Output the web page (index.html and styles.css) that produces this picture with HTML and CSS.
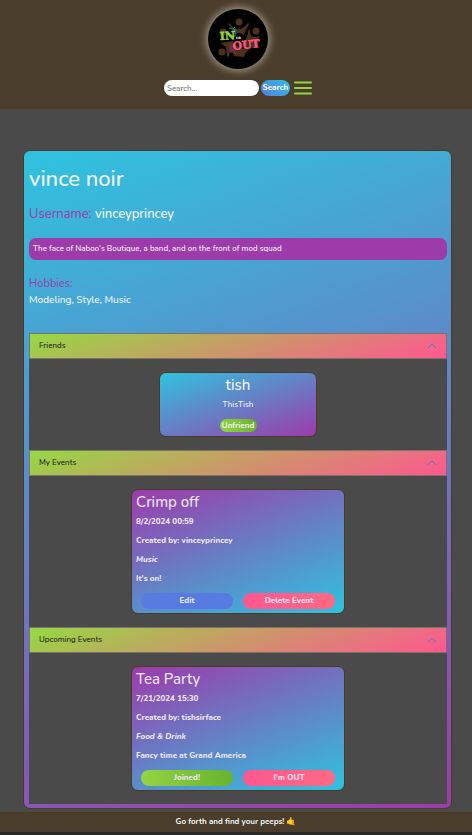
FILE: index.html
```html
<!DOCTYPE html>
<html lang="en">
<head>
<meta charset="utf-8">
<meta name="viewport" content="width=device-width, initial-scale=1">
<title>In or Out</title>
<link rel="stylesheet" href="styles.css">
</head>
<body>
<header class="site-header">
  <a class="logo" href="#" aria-label="In or Out home">
    <svg viewBox="0 0 60 60" aria-hidden="true">
      <g fill="#4b3119">
        <circle cx="31" cy="13" r="3.5"/><circle cx="48" cy="22" r="3.5"/><circle cx="14" cy="43" r="3.5"/><circle cx="15" cy="23" r="3.5"/>
        <path d="M21 14l5 5q5 3 10-1l4-4 1 1-6 12-7-1-3-6-5-5z"/>
        <path d="M41 19l2 8q5 2 8 0l-1 10-9 3-5-6 3-6z"/>
        <path d="M34 40l7 0-4 5-1 3-10-1-3-7 3-5z"/>
        <path d="M12 34l13-2 1 7-4 3-1 6-2-1-1-9z"/>
      </g>
      <circle cx="31" cy="29" r="5" fill="#050505"/>
      <g fill="none" stroke-width="1">
        <path d="M21 20l2-1 2 1 2-2M24 21h3v6h-3M27 20v5" stroke="#178b93"/>
        <path d="M23 36v8M25 41l3 4M22 43l4-3" stroke="#8b2b78"/>
      </g>
      <text class="logo-in" x="12" y="31" transform="rotate(-4 12 31)">IN</text>
      <text class="logo-or" x="28" y="30">OR</text>
      <text class="logo-out" x="25" y="41" transform="rotate(-6 25 41)">OUT</text>
    </svg>
  </a>
  <form class="search">
    <input class="search-input" type="search" placeholder="Search..." aria-label="Search">
    <button class="search-button" type="button">Search</button>
    <button class="menu-button" type="button" aria-label="Menu">
      <svg viewBox="0 0 18 14" aria-hidden="true"><path d="M1 1.5h16M1 7h16M1 12.5h16"/></svg>
    </button>
  </form>
</header>
<main class="page">
  <article class="profile">
    <h1 class="name">vince noir</h1>
    <h2 class="username"><span class="label">Username:</span> vinceyprincey</h2>
    <p class="bio">The face of Naboo's Boutique, a band, and on the front of mod squad</p>
    <h3 class="hobbies-title">Hobbies:</h3>
    <p class="hobbies">Modeling, Style, Music</p>
    <div class="accordion">
      <section>
        <button class="accordion-head" type="button" aria-expanded="true">Friends
          <svg class="chevron" viewBox="0 0 10 6" aria-hidden="true"><path d="M1 5l4-4 4 4"/></svg>
        </button>
        <div class="accordion-body">
          <div class="friend-card">
            <h4 class="card-title">tish</h4>
            <p class="friend-name">ThisTish</p>
            <button class="unfriend green" type="button">Unfriend</button>
          </div>
        </div>
      </section>
      <section>
        <button class="accordion-head" type="button" aria-expanded="true">My Events
          <svg class="chevron" viewBox="0 0 10 6" aria-hidden="true"><path d="M1 5l4-4 4 4"/></svg>
        </button>
        <div class="accordion-body">
          <div class="event-card">
            <h4 class="card-title">Crimp off</h4>
            <p>8/2/2024 00:59</p>
            <p>Created by: vinceyprincey</p>
            <p class="category">Music</p>
            <p>It's on!</p>
            <div class="actions">
              <button class="action blue" type="button">Edit</button>
              <button class="action pink" type="button">Delete Event</button>
            </div>
          </div>
        </div>
      </section>
      <section>
        <button class="accordion-head" type="button" aria-expanded="true">Upcoming Events
          <svg class="chevron" viewBox="0 0 10 6" aria-hidden="true"><path d="M1 5l4-4 4 4"/></svg>
        </button>
        <div class="accordion-body">
          <div class="event-card">
            <h4 class="card-title">Tea Party</h4>
            <p>7/21/2024 15:30</p>
            <p>Created by: tishsirface</p>
            <p class="category">Food &amp; Drink</p>
            <p>Fancy time at Grand America</p>
            <div class="actions">
              <button class="action green" type="button">Joined!</button>
              <button class="action pink" type="button">I'm OUT</button>
            </div>
          </div>
        </div>
      </section>
    </div>
  </article>
</main>
<footer class="site-footer">Go forth and find your peeps! <span class="emoji">🤙</span></footer>
</body>
</html>
```

FILE: styles.css
```css
* { box-sizing: border-box; }
body {
  margin: 0;
  min-height: 100vh;
  background: #292929;
  color: #f4f4f4;
  font: 500 8px/12px Nunito, "Open Sans", "Noto Sans", sans-serif;
}
h1, h2, h3, h4, p { margin: 0; font-weight: 500; }
button, input { font: inherit; color: inherit; border: 0; padding: 0; margin: 0; }
svg { display: block; }

.site-header {
  display: flex;
  flex-direction: column;
  align-items: center;
  gap: 11px;
  padding: 9px 0 11px 4px;
  background: #4a3d2b;
  border-bottom: 2px solid #4a3b1f;
}
.logo {
  width: 60px;
  height: 60px;
  border-radius: 50%;
  background: #000;
  box-shadow: 0 0 8px 1px #b5aa98;
}
.logo-in, .logo-out, .logo-or { font-family: "DejaVu Serif", serif; font-weight: 700; }
.logo-in { font-size: 11px; fill: #93d541; stroke: #93d541; stroke-width: 0.5; }
.logo-or { font-size: 3px; fill: #fff; }
.logo-out { font-size: 11px; fill: #fb5788; stroke: #fb5788; stroke-width: 0.5; }
.search { display: flex; align-items: center; gap: 2px; }
.search-input {
  width: 95px;
  height: 16px;
  padding: 0 3px;
  border-radius: 8px;
  background: #fff;
  color: #333;
  appearance: none;
}
.search-input::placeholder { color: #777; }
.search-button {
  width: 29px;
  height: 16px;
  border-radius: 8px;
  background: linear-gradient(45deg, #577be0, #2fc0de);
  font-weight: 800;
}
.menu-button { width: 18px; height: 14px; margin-left: 2px; background: none; }
.menu-button path { stroke: #93d541; stroke-width: 2; stroke-linecap: round; }

.page { padding: 41px 20px 3px 23px; background: #4a4a4a; }
.profile {
  padding: 12px 4px 4px 5px;
  border: 1px solid #4a3b22;
  border-radius: 7px;
  background: linear-gradient(160deg, #2fc3e0, #9d3bab);
}
.name { font-size: 22px; line-height: 32px; }
.username { margin-top: 9px; font-size: 13px; line-height: 20px; }
.label, .hobbies-title { color: #9d3bab; font-weight: 400; }
.bio {
  margin-top: 14px;
  padding: 5px 4px;
  border-radius: 7px;
  background: #9d3bab;
}
.hobbies-title { margin-top: 16px; font-size: 11px; line-height: 16px; }
.hobbies { font-size: 10px; line-height: 16px; }
.accordion { margin-top: 25px; background: #4a4a4a; }
.accordion-head {
  display: flex;
  align-items: center;
  justify-content: space-between;
  width: 100%;
  height: 26px;
  padding: 0 9px;
  border: 1px solid #7c7468;
  background: linear-gradient(160deg, #96d943, #ff5790);
  color: #222;
}
.chevron { width: 10px; height: 6px; }
.chevron path { fill: none; stroke: #5578d9; stroke-width: 1; }
.accordion-body { display: flex; justify-content: center; padding: 13px; }
.friend-card, .event-card { border: 1px solid #4a3b22; border-radius: 7px; }
.friend-card {
  display: flex;
  flex-direction: column;
  align-items: center;
  width: 158px;
  padding: 2px 4px 4px;
  background: linear-gradient(160deg, #2fc3e0, #9d3bab);
}
.card-title { font-size: 15px; line-height: 20px; }
.friend-name { margin: 4px 0 8px; }
.unfriend { width: 37px; height: 13px; border-radius: 7px; font-weight: 700; }
.green { background: linear-gradient(70deg, #96d543, #67b12e); }
.blue { background: #577be0; }
.pink { background: linear-gradient(90deg, #ff5790, #ff6982); }
.event-card {
  width: 214px;
  padding: 2px 4px 4px;
  background: linear-gradient(160deg, #9d3bab, #2fc3e0);
  color: #eae4f2;
}
.event-card p { margin-bottom: 7px; font-weight: 800; }
.event-card .card-title { margin-bottom: 4px; }
.event-card .category { font-style: italic; }
.actions { display: grid; grid-template-columns: 1fr 1fr; gap: 10px; margin-top: 8px; padding: 0 5px; }
.action { height: 16px; border-radius: 8px; font-weight: 800; }
.site-footer {
  padding: 3px 0 4px;
  border-top: 1px solid #4a3b1f;
  background: #4a3d2b;
  text-align: center;
  font-weight: 700;
}
.emoji { font-family: "Noto Color Emoji", sans-serif; font-weight: 400; }
```
